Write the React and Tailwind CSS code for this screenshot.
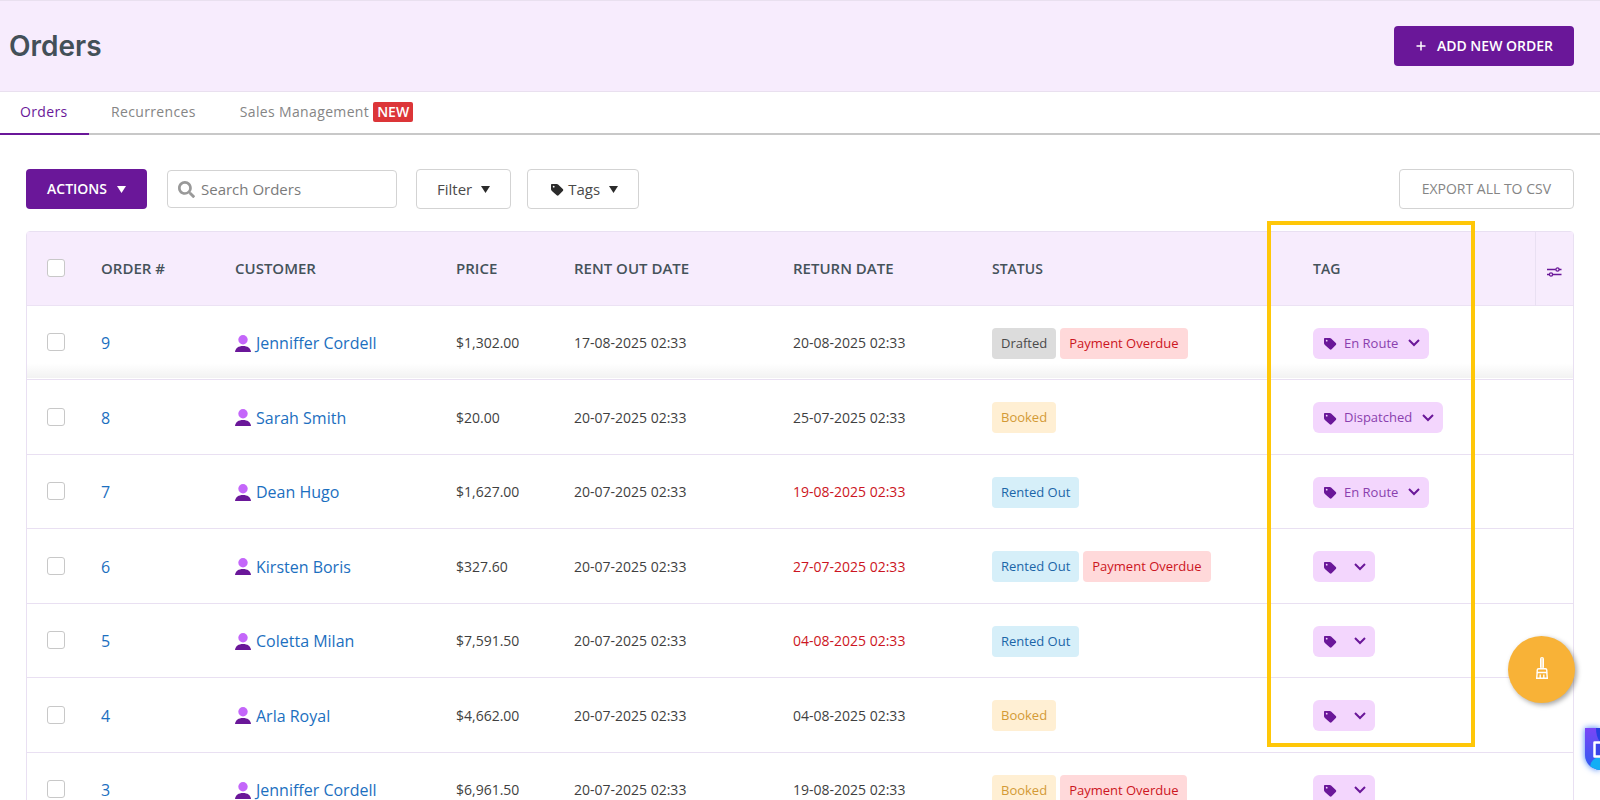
import { FaSearch } from 'react-icons/fa';

const orders = [
    { id: 9, customer: 'Jenniffer Cordell', price: '$1,302.00', rentOut: '17-08-2025 02:33', returned: '20-08-2025 02:33', late: false, status: ['Drafted', 'Payment Overdue'], tag: 'En Route' },
    { id: 8, customer: 'Sarah Smith', price: '$20.00', rentOut: '20-07-2025 02:33', returned: '25-07-2025 02:33', late: false, status: ['Booked'], tag: 'Dispatched' },
    { id: 7, customer: 'Dean Hugo', price: '$1,627.00', rentOut: '20-07-2025 02:33', returned: '19-08-2025 02:33', late: true, status: ['Rented Out'], tag: 'En Route' },
    { id: 6, customer: 'Kirsten Boris', price: '$327.60', rentOut: '20-07-2025 02:33', returned: '27-07-2025 02:33', late: true, status: ['Rented Out', 'Payment Overdue'], tag: '' },
    { id: 5, customer: 'Coletta Milan', price: '$7,591.50', rentOut: '20-07-2025 02:33', returned: '04-08-2025 02:33', late: true, status: ['Rented Out'], tag: '' },
    { id: 4, customer: 'Arla Royal', price: '$4,662.00', rentOut: '20-07-2025 02:33', returned: '04-08-2025 02:33', late: false, status: ['Booked'], tag: '' },
    { id: 3, customer: 'Jenniffer Cordell', price: '$6,961.50', rentOut: '20-07-2025 02:33', returned: '19-08-2025 02:33', late: false, status: ['Booked', 'Payment Overdue'], tag: '' },
];

const statusStyles = {
    Drafted: 'bg-[#dcdcdc] text-[#4a4a4a]',
    Booked: 'bg-[#ffefd3] text-[#d39a35]',
    'Rented Out': 'bg-[#d6eff9] text-[#1b66a8]',
    'Payment Overdue': 'bg-[#ffd9da] text-[#cc1522]',
};

const TagIcon = ({ className }) => (
    <svg viewBox="0 0 14 14" className={className} fill="currentColor" aria-hidden="true">
        <path fillRule="evenodd" d="M2 1h4.8c.5 0 .9.2 1.3.5l4.7 4.5c.6.6.6 1.4 0 2l-4.2 4.300c-.6.6-1.3.6-1.9 0L1.900 7.900C1.300 7.300 1 6.800 1 6.200V2c0-.6.4-1 1-1zM3.700 2.800a.9.9 0 1 0 0 1.800.9.9 0 0 0 0-1.800z" />
    </svg>
);

const Caret = () => (
    <svg viewBox="0 0 9 7" className="h-[7px] w-[9px]" fill="currentColor" aria-hidden="true">
        <path d="M0 0h9L4.500 7z" />
    </svg>
);

const Chevron = () => (
    <svg viewBox="0 0 12 8" className="h-2 w-3" fill="none" stroke="currentColor" strokeWidth="2" aria-hidden="true">
        <path d="M1 1l5 5 5-5" />
    </svg>
);

const PersonIcon = () => (
    <svg viewBox="0 0 16 17" className="h-[17px] w-4" aria-hidden="true">
        <circle cx="8" cy="4.700" r="4.700" fill="#c466fa" />
        <path d="M0 17c.5-4 3.500-6 8-6s7.500 2 8 6z" fill="#6a1799" />
    </svg>
);

const SlidersIcon = () => (
    <svg viewBox="0 0 16 10" className="h-[10px] w-4" fill="none" stroke="currentColor" strokeWidth="1.300" aria-hidden="true">
        <path d="M1 2.500h8.800M13 2.500h2.500M1 7.500h2.500M6.700 7.500h8.800" />
        <circle cx="11.500" cy="2.500" r="1.600" />
        <circle cx="5" cy="7.500" r="1.600" />
    </svg>
);

const BroomIcon = () => (
    <svg viewBox="0 0 12 22" className="h-[22px] w-3" fill="none" stroke="#fff" aria-hidden="true">
        <rect x="4.500" y=".5" width="3" height="11" rx="1" fill="#fff" fillOpacity=".7" />
        <path strokeWidth="1.400" d="M2.700 11.700h6.600c1 0 1.500.5 1.500 1.500v2.300H1.200v-2.300c0-1 .5-1.500 1.500-1.500z" />
        <path strokeWidth="1.400" d="M1.200 15.500L.7 21.200h10.600l-.5-5.700M4.200 21v-3.500M7.800 21v-3.500" />
    </svg>
);

const Checkbox = ({ label }) => (
    <input
        type="checkbox"
        aria-label={label}
        className="block h-[18px] w-[18px] appearance-none rounded-[3px] border border-[#c8c8c8] bg-white"
    />
);

const TagButton = ({ tag }) => (
    <button
        aria-label={tag || 'Add tag'}
        className="flex h-[31px] items-center rounded-md bg-[#f3d6fd] pr-[9px] pl-[10px] text-[13px] text-[#8a3fae]"
    >
        <TagIcon className="mt-[2px] h-[14px] w-[14px] text-[#6a1799]" />
        <span className="mr-[10px] ml-[7px]">{tag}</span>
        <span className="text-[#6a1799]"><Chevron /></span>
    </button>
);

const App = () => {
    return (
        <div className="relative h-screen overflow-hidden bg-white font-['Open_Sans',sans-serif] text-[#3f3f3f]">
            <header className="flex items-center justify-between border-t border-b border-[#e9e0ef] bg-[#f7ecfd] py-[25px] pr-[26px] pl-[9px]">
                <h1 className="font-['Inter',sans-serif] text-[28px] leading-10 font-semibold text-[#435058]">Orders</h1>
                <button className="flex h-10 items-center gap-[10px] rounded bg-[#6a1799] px-[21px] text-sm font-semibold text-white">
                    <svg viewBox="0 0 12 12" className="h-3 w-3" stroke="currentColor" strokeWidth="1.500" aria-hidden="true">
                        <path d="M1.500 6h9M6 1.500v9" />
                    </svg>
                    ADD NEW ORDER
                </button>
            </header>

            <nav className="flex h-[43px] border-b-2 border-[#c8c8c8] text-sm tracking-wide text-[#858585] *:pb-[2px]">
                <a href="#orders" className="-mb-[2px] flex w-[89px] items-center border-b-2 border-[#6a1799] pl-5 text-[#6a1799]">Orders</a>
                <a href="#recurrences" className="flex items-center pl-[22px]">Recurrences</a>
                <a href="#sales" className="flex items-center pl-11">
                    Sales Management
                    <span className="ml-1 rounded-xs bg-[#dc3538] px-1 font-semibold tracking-normal text-white">NEW</span>
                </a>
            </nav>

            <main className="px-[26px] pt-[34px]">
                <div className="flex items-center">
                    <button className="flex h-10 items-center gap-[10px] rounded bg-[#6a1799] px-[21px] text-sm font-semibold text-white">
                        ACTIONS <Caret />
                    </button>
                    <label className="ml-5 flex h-[38px] w-[230px] items-center gap-[6px] rounded border border-[#d3d3d3] px-[10px]">
                        <FaSearch className="h-[17px] w-[17px] shrink-0 text-[#999]" />
                        <input
                            type="search"
                            aria-label="Search Orders"
                            placeholder="Search Orders"
                            className="min-w-0 flex-1 text-[15px] outline-none placeholder:text-[#7b7b7b]"
                        />
                    </label>
                    <button className="ml-[19px] flex h-10 items-center gap-[9px] rounded border border-[#d3d3d3] px-5 text-[15px] text-[#4a4a4a]">
                        Filter <span className="text-[#2b2b2b]"><Caret /></span>
                    </button>
                    <button className="ml-4 flex h-10 items-center gap-[9px] rounded border border-[#d3d3d3] pr-5 pl-[22px] text-[15px] text-[#4a4a4a]">
                        <span className="flex items-center gap-1">
                            <TagIcon className="mt-[2px] h-[14px] w-[14px] text-[#2b2b2b]" />
                            Tags
                        </span>
                        <span className="text-[#2b2b2b]"><Caret /></span>
                    </button>
                    <button className="ml-auto h-10 rounded border border-[#d3d3d3] px-[22px] text-sm text-[#858585]">
                        EXPORT ALL TO CSV
                    </button>
                </div>

                <div className="mt-[22px] rounded border border-[#e9e0f2]">
                    <table className="w-full table-fixed text-left">
                        <colgroup>
                            <col className="w-[54px]" />
                            <col className="w-[134px]" />
                            <col className="w-[221px]" />
                            <col className="w-[118px]" />
                            <col className="w-[219px]" />
                            <col className="w-[199px]" />
                            <col />
                            <col className="w-[242px]" />
                            <col className="w-[38px]" />
                        </colgroup>
                        <thead>
                            <tr className="h-[73px] border-b border-[#ece2f4] bg-[#f7ecfd] text-[15px] text-[#45525a] *:pl-5 *:font-semibold">
                                <th><Checkbox label="Select all orders" /></th>
                                <th>ORDER #</th>
                                <th>CUSTOMER</th>
                                <th>PRICE</th>
                                <th>RENT OUT DATE</th>
                                <th>RETURN DATE</th>
                                <th className="pt-[2px] text-sm">STATUS</th>
                                <th className="relative pt-[2px] text-sm">
                                    TAG
                                    {/* highlight frame around the tag column */}
                                    <div className="pointer-events-none absolute -top-[11px] -left-[26px] z-10 h-[526px] w-[208px] border-4 border-[#ffc708]" />
                                </th>
                                <th className="border-l border-[#e9e0f2] !pl-[10px]">
                                    <button aria-label="Column settings" className="mt-2 block text-[#6a1799]"><SlidersIcon /></button>
                                </th>
                            </tr>
                        </thead>
                        <tbody>
                            {orders.map((order) => (
                                <tr
                                    key={order.id}
                                    className="h-[74px] border-b border-[#e9e0f2] text-sm *:pt-[2px] *:pl-5 first:bg-linear-to-t first:from-[#f2f2f2] first:to-white first:to-20% even:h-[75px]"
                                >
                                    <td className="!pt-0"><Checkbox label={`Select order ${order.id}`} /></td>
                                    <td><a href={`#order-${order.id}`} className="text-base text-[#1c6fc0]">{order.id}</a></td>
                                    <td>
                                        <a href={`#customer-${order.id}`} className="flex items-center gap-[5px] text-base text-[#1c6fc0]">
                                            <PersonIcon />
                                            {order.customer}
                                        </a>
                                    </td>
                                    <td>{order.price}</td>
                                    <td>{order.rentOut}</td>
                                    <td className={order.late ? 'text-[#cc1522]' : ''}>{order.returned}</td>
                                    <td>
                                        <div className="flex gap-1">
                                            {order.status.map((status) => (
                                                <span key={status} className={`flex h-[31px] items-center rounded px-[9px] text-[13px] ${statusStyles[status]}`}>
                                                    {status}
                                                </span>
                                            ))}
                                        </div>
                                    </td>
                                    <td><TagButton tag={order.tag} /></td>
                                    <td></td>
                                </tr>
                            ))}
                        </tbody>
                    </table>
                </div>
            </main>

            <button
                aria-label="Clean up"
                className="fixed right-[25px] bottom-[97px] flex h-[67px] w-[67px] items-center justify-center rounded-full bg-[#f8b237] pb-1 shadow-[2px_2px_5px_rgba(0,0,0,0.35)]"
            >
                <BroomIcon />
            </button>
            <button aria-label="Open chat" className="fixed right-0 bottom-[30px]">
                <svg viewBox="0 0 15 42" className="h-[42px] w-[15px] drop-shadow-[0_0_3px_#3f7cf5]" aria-hidden="true">
                    <defs>
                        <linearGradient id="chat" x1="0" y1="0" x2="0" y2="1">
                            <stop offset="0" stopColor="#7a45f7" />
                            <stop offset="1" stopColor="#2b5cf0" />
                        </linearGradient>
                        <clipPath id="chat-shape">
                            <path d="M0 0h15v42C6 41 0 35 0 27z" />
                        </clipPath>
                    </defs>
                    <g clipPath="url(#chat-shape)">
                        <path d="M0 0h15v42H0z" fill="url(#chat)" />
                        <path d="M11 0h4v14c-3-4-4-9-4-14z" fill="#2440e0" />
                        <circle cx="15" cy="39" r="10" fill="#12aef5" />
                    </g>
                    <path d="M18 14.500H9.500v14H18" fill="#3a44e8" stroke="#fff" strokeWidth="2.500" strokeLinejoin="round" />
                </svg>
            </button>
        </div>
    );
};

export default App;
